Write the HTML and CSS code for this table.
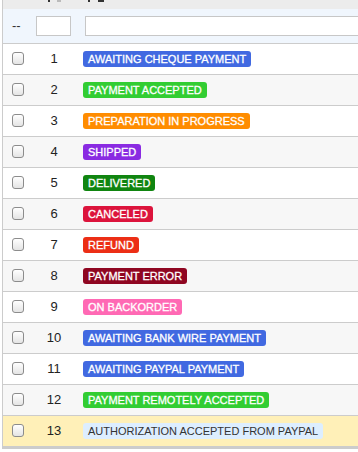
FILE: index.html
```html
<!DOCTYPE html>
<html lang="en">
<head>
    <meta charset="UTF-8">
    <meta name="viewport" content="width=device-width, initial-scale=1.0">
    <title>Order statuses</title>
    <link rel="stylesheet" href="styles.css">
</head>
<body>

    <div class="lista">
        <div class="topo">
            <span class="seta s1"></span>
            <span class="seta s2"></span>
            <span class="seta s3"></span>
            <span class="seta s4"></span>
        </div>
        <table class="tabela">
            <colgroup>
                <col class="col-check">
                <col class="col-id">
                <col>
            </colgroup>
            <tr class="filtro">
                <td class="c-check">--</td>
                <td class="c-id"><div class="campo curto"></div></td>
                <td class="c-nome"><div class="campo longo"></div></td>
            </tr>
            <tr>
                <td class="c-check"><span class="caixa"></span></td>
                <td class="c-id">1</td>
                <td class="c-nome"><span class="etiqueta" style="background:#4169e1">AWAITING CHEQUE PAYMENT</span></td>
            </tr>
            <tr class="par">
                <td class="c-check"><span class="caixa"></span></td>
                <td class="c-id">2</td>
                <td class="c-nome"><span class="etiqueta" style="background:#32cd32">PAYMENT ACCEPTED</span></td>
            </tr>
            <tr>
                <td class="c-check"><span class="caixa"></span></td>
                <td class="c-id">3</td>
                <td class="c-nome"><span class="etiqueta" style="background:#ff8c00">PREPARATION IN PROGRESS</span></td>
            </tr>
            <tr class="par">
                <td class="c-check"><span class="caixa"></span></td>
                <td class="c-id">4</td>
                <td class="c-nome"><span class="etiqueta" style="background:#8a2be2">SHIPPED</span></td>
            </tr>
            <tr>
                <td class="c-check"><span class="caixa"></span></td>
                <td class="c-id">5</td>
                <td class="c-nome"><span class="etiqueta" style="background:#108510">DELIVERED</span></td>
            </tr>
            <tr class="par">
                <td class="c-check"><span class="caixa"></span></td>
                <td class="c-id">6</td>
                <td class="c-nome"><span class="etiqueta" style="background:#dc143c">CANCELED</span></td>
            </tr>
            <tr>
                <td class="c-check"><span class="caixa"></span></td>
                <td class="c-id">7</td>
                <td class="c-nome"><span class="etiqueta" style="background:#ec2e15">REFUND</span></td>
            </tr>
            <tr class="par">
                <td class="c-check"><span class="caixa"></span></td>
                <td class="c-id">8</td>
                <td class="c-nome"><span class="etiqueta" style="background:#8f0621">PAYMENT ERROR</span></td>
            </tr>
            <tr>
                <td class="c-check"><span class="caixa"></span></td>
                <td class="c-id">9</td>
                <td class="c-nome"><span class="etiqueta" style="background:#ff69b4">ON BACKORDER</span></td>
            </tr>
            <tr class="par">
                <td class="c-check"><span class="caixa"></span></td>
                <td class="c-id">10</td>
                <td class="c-nome"><span class="etiqueta" style="background:#4169e1">AWAITING BANK WIRE PAYMENT</span></td>
            </tr>
            <tr>
                <td class="c-check"><span class="caixa"></span></td>
                <td class="c-id">11</td>
                <td class="c-nome"><span class="etiqueta" style="background:#4169e1">AWAITING PAYPAL PAYMENT</span></td>
            </tr>
            <tr class="par">
                <td class="c-check"><span class="caixa"></span></td>
                <td class="c-id">12</td>
                <td class="c-nome"><span class="etiqueta" style="background:#32cd32">PAYMENT REMOTELY ACCEPTED</span></td>
            </tr>
            <tr class="destaque">
                <td class="c-check"><span class="caixa"></span></td>
                <td class="c-id">13</td>
                <td class="c-nome"><span class="etiqueta clara" style="background:#ddeeff">AUTHORIZATION ACCEPTED FROM PAYPAL</span></td>
            </tr>
        </table>
    </div>

</body>
</html>
```

FILE: styles.css
```css
* {
    margin: 0;
    padding: 0;
    box-sizing: border-box;
    font-family: "Liberation Sans", Arial, sans-serif;
}

body {
    background: white;
    color: #222;
    overflow: hidden;
}

.lista {
    margin-left: 2px;
    width: 420px;
    border-left: 1px solid #cccccc;
    border-bottom: 2px solid #cccccc;
}

/* cabecalho cortado com as setas de ordenacao */
.topo {
    position: relative;
    height: 9px;
    background: #ececec;
}

.seta {
    position: absolute;
    top: 0;
    height: 2px;
    width: 2px;
    background: #333;
}

.s1 { left: 45px; }
.s2 { left: 54px; width: 4px; background: #bbb; }
.s3 { left: 85px; }
.s4 { left: 95px; width: 6px; }

.tabela {
    width: 100%;
    border-collapse: collapse;
    table-layout: fixed;
    font-size: 13px;
}

.col-check { width: 30px; }
.col-id { width: 42px; }

.tabela td {
    height: 31px;
    border-bottom: 1px solid #cccccc;
    vertical-align: middle;
    padding: 0;
}

.filtro td {
    height: 34px;
    background: #f0f6fd;
}

.filtro .c-check {
    padding-left: 9px !important;
    color: #333;
}

.c-check {
    padding-left: 8px !important;
}

.c-id {
    text-align: center;
    color: #222;
}

.filtro .c-id {
    padding-left: 4px !important;
}

.c-nome {
    padding-left: 8px !important;
}

.campo {
    height: 20px;
    background: white;
    border: 1px solid #c7c7c7;
}

.curto {
    width: 35px;
    margin-left: -1px;
}

.longo {
    margin-left: 2px;
    width: 340px;
}

.par td {
    background: #f7f7f7;
}

.destaque td {
    background: #fff0b8;
}

.caixa {
    display: block;
    width: 12px;
    height: 13px;
    border: 1px solid #8c8c8c;
    border-radius: 3px;
    background: linear-gradient(#ffffff, #e4e4e4);
    margin-left: 1px;
}

.etiqueta {
    display: inline-block;
    color: white;
    font-size: 11px;
    line-height: 16px;
    padding: 0 5px;
    border-radius: 3px;
    -webkit-text-stroke: 0.3px currentColor;
}

.clara {
    color: #333;
    -webkit-text-stroke: 0;
}
```
